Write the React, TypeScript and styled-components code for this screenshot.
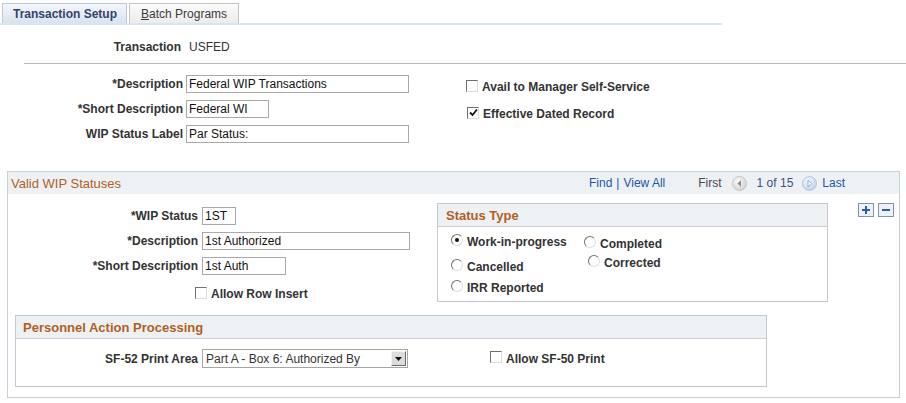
import React from "react";
import styled, { createGlobalStyle } from "styled-components";

const GlobalStyle = createGlobalStyle`
  body {
    margin: 0;
    background: #ffffff;
    font-family: "Liberation Sans", Arial, sans-serif;
    font-size: 12px;
    color: #333333;
  }
`;

const Page = styled.div`
  width: 906px;
  height: 403px;
  overflow: hidden;
`;

// tabs
const TabBar = styled.div`
  display: flex;
  align-items: flex-end;
  gap: 2px;
  width: 722px;
  padding: 3px 0 0 2px;
  border-bottom: 2px solid #dbe4f1;
  box-sizing: border-box;
`;

const Tab = styled.div<{ $active?: boolean; $w: number }>`
  width: ${(p) => p.$w}px;
  height: 20px;
  box-sizing: border-box;
  display: flex;
  align-items: center;
  padding-left: ${(p) => (p.$active ? 10 : 11)}px;
  border: 1px solid ${(p) => (p.$active ? "#b9c9df" : "#c3c3c3")};
  border-bottom: none;
  font-weight: ${(p) => (p.$active ? "bold" : "normal")};
  color: ${(p) => (p.$active ? "#34446a" : "#3a3a3a")};
  background: ${(p) =>
    p.$active
      ? "linear-gradient(#f3f6fb, #d9e3f1)"
      : "linear-gradient(#fbfbfb, #ececec)"};

  u {
    text-decoration: underline;
  }
`;

// header info
const InfoRow = styled.div`
  display: grid;
  grid-template-columns: 181px auto;
  column-gap: 8px;
  margin-top: 15px;
  line-height: 14px;
`;

const Label = styled.span`
  font-weight: bold;
  text-align: right;
  color: #333333;
  white-space: nowrap;
`;

const Value = styled.span`
  color: #333333;
`;

const Divider = styled.div`
  margin: 9px 0 0 24px;
  border-top: 1px solid #bababa;
`;

const TopForm = styled.div`
  display: flex;
  margin-top: 11px;
`;

const FieldGrid = styled.div<{ $label: number; $gap?: number; $rowGap?: number }>`
  display: grid;
  grid-template-columns: ${(p) => p.$label}px auto;
  column-gap: ${(p) => p.$gap ?? 3}px;
  row-gap: ${(p) => p.$rowGap ?? 7}px;
  align-items: center;
  align-content: start;
`;

const TextField = styled.input<{ $w: number }>`
  width: ${(p) => p.$w}px;
  height: 18px;
  box-sizing: border-box;
  border: 1px solid #a9a9a9;
  padding: 0 2px;
  margin: 0;
  font-family: "Liberation Sans", Arial, sans-serif;
  font-size: 12px;
  color: #111111;
  background: #ffffff;
  outline: none;
  justify-self: start;
`;

const CheckColumn = styled.div`
  display: flex;
  flex-direction: column;
  gap: 13px;
  margin-left: 57px;
  padding-top: 5px;
`;

const CheckRow = styled.label<{ $ml?: number; $mt?: number }>`
  display: flex;
  align-items: center;
  gap: 4px;
  height: 14px;
  margin-left: ${(p) => p.$ml ?? 0}px;
  margin-top: ${(p) => p.$mt ?? 0}px;
  font-weight: bold;
  color: #333333;
  white-space: nowrap;
`;

const Box = styled.span`
  width: 12px;
  height: 12px;
  box-sizing: border-box;
  border: 1px solid;
  border-color: #707070 #dcdcdc #dcdcdc #707070;
  background: #ffffff;
  display: inline-flex;
  align-items: center;
  justify-content: center;
  flex: none;
  margin-top: -3px;
`;

const RadioDot = styled.span<{ $on?: boolean }>`
  width: 12px;
  height: 12px;
  box-sizing: border-box;
  border-radius: 50%;
  border: 1px solid;
  border-color: #707070 #dedede #dedede #707070;
  background: #ffffff;
  display: inline-flex;
  align-items: center;
  justify-content: center;
  flex: none;
  margin-top: -4px;

  &::after {
    content: "";
    width: 4px;
    height: 4px;
    border-radius: 50%;
    background: ${(p) => (p.$on ? "#111111" : "transparent")};
  }
`;

// scroll area section
const Section = styled.div`
  margin: 28px 6px 0 7px;
  border: 1px solid #c9cfd6;
  padding-bottom: 10px;
`;

const SectionHeader = styled.div`
  height: 22px;
  background: #eef1f4;
  display: flex;
  align-items: center;
  padding: 0 54px 0 3px;
`;

const SectionTitle = styled.span`
  font-size: 13px;
  color: #b1601f;
`;

const Nav = styled.div`
  display: flex;
  align-items: center;
  margin-left: auto;
`;

const NavText = styled.span<{ $tone?: "link" | "muted" | "count"; $ml?: number }>`
  margin-left: ${(p) => p.$ml ?? 0}px;
  color: ${(p) =>
    p.$tone === "link" ? "#2356a8" : p.$tone === "count" ? "#3a4f86" : "#4a4a4a"};
  white-space: nowrap;
`;

const NavIcon = styled.svg<{ $ml: number }>`
  margin-left: ${(p) => p.$ml}px;
  flex: none;
`;

const SectionBody = styled.div`
  display: grid;
  grid-template-columns: 429px 391px auto;
  padding-top: 9px;
`;

const LeftCol = styled.div`
  padding-top: 4px;
`;

const GroupBox = styled.div<{ $w: number; $h: number }>`
  width: ${(p) => p.$w}px;
  height: ${(p) => p.$h}px;
  box-sizing: border-box;
  border: 1px solid #c4c9cf;
`;

const GroupHeader = styled.div<{ $pl: number }>`
  height: 22px;
  display: flex;
  align-items: center;
  padding-left: ${(p) => p.$pl}px;
  background: #eef1f4;
  border-bottom: 1px solid #c9ced4;
  font-size: 13px;
  font-weight: bold;
  color: #b1601f;
`;

const RadioGrid = styled.div`
  display: grid;
  grid-template-columns: 133px auto;
  row-gap: 7px;
  padding: 8px 0 0 13px;
`;

const RowButtons = styled.div`
  display: flex;
  gap: 4px;
  margin-left: 30px;
  align-items: flex-start;
`;

const Personnel = styled(GroupBox)`
  margin: 13px 0 0 7px;
`;

const PersonnelBody = styled.div`
  display: flex;
  align-items: center;
  padding-top: 10px;
`;

const Select = styled.div`
  width: 206px;
  height: 19px;
  box-sizing: border-box;
  border: 1px solid #a5a5a5;
  display: flex;
  align-items: center;
  justify-content: space-between;
  padding: 0 1px 0 3px;
  color: #333333;
  background: #ffffff;
`;

const SelectArrow = styled.span`
  width: 15px;
  height: 15px;
  box-sizing: border-box;
  border: 1px solid;
  border-color: #f4f4f4 #6a6a6a #6a6a6a #f4f4f4;
  background: #dcdcdc;
  display: inline-flex;
  align-items: center;
  justify-content: center;
`;

const Checkbox = ({ checked }: { checked?: boolean }) => (
  <Box>
    {checked && (
      <svg width="9" height="9" viewBox="0 0 9 9">
        <path d="M1 4.5 L3.5 7 L8 1.5" stroke="#111" strokeWidth="1.8" fill="none" />
      </svg>
    )}
  </Box>
);

const PrevIcon = () => (
  <NavIcon $ml={10} width="15" height="15" viewBox="0 0 15 15">
    <defs>
      <radialGradient id="pg" cx="0.4" cy="0.35" r="0.7">
        <stop offset="0" stopColor="#fbfbfb" />
        <stop offset="1" stopColor="#cfcfcf" />
      </radialGradient>
    </defs>
    <circle cx="7.5" cy="7.5" r="7" fill="url(#pg)" stroke="#c6c6c6" />
    <path d="M9 4.2 L5.4 7.5 L9 10.8 Z" fill="#8c8c8c" />
  </NavIcon>
);

const NextIcon = () => (
  <NavIcon $ml={9} width="15" height="15" viewBox="0 0 15 15">
    <defs>
      <radialGradient id="ng" cx="0.4" cy="0.35" r="0.7">
        <stop offset="0" stopColor="#f4f8fd" />
        <stop offset="1" stopColor="#bcd1ec" />
      </radialGradient>
    </defs>
    <circle cx="7.5" cy="7.5" r="7" fill="url(#ng)" stroke="#b4c8e2" />
    <path d="M6 4.2 L9.6 7.5 L6 10.8 Z" fill="#ffffff" stroke="#7f9ccb" strokeWidth="0.8" />
  </NavIcon>
);

const RowButton = ({ minus }: { minus?: boolean }) => (
  <svg width="16" height="14" viewBox="0 0 16 14">
    <rect x="0.5" y="0.5" width="15" height="13" fill="#eef2f8" stroke="#7c93b4" />
    <path d="M4 7 H12" stroke="#2a5ea8" strokeWidth="2" />
    {!minus && <path d="M8 3 V11" stroke="#2a5ea8" strokeWidth="2" />}
  </svg>
);

const App: React.FC = () => {
  return (
    <Page>
      <GlobalStyle />
      <TabBar>
        <Tab $active $w={125}>Transaction Setup</Tab>
        <Tab $w={110}>
          <u>B</u>atch Programs
        </Tab>
      </TabBar>

      <InfoRow>
        <Label>Transaction</Label>
        <Value>USFED</Value>
      </InfoRow>
      <Divider />

      <TopForm>
        <FieldGrid $label={183}>
          <Label>*Description</Label>
          <TextField $w={223} readOnly value="Federal WIP Transactions" />
          <Label>*Short Description</Label>
          <TextField $w={83} readOnly value="Federal WI" />
          <Label>WIP Status Label</Label>
          <TextField $w={223} readOnly value="Par Status:" />
        </FieldGrid>
        <CheckColumn>
          <CheckRow>
            <Checkbox />
            Avail to Manager Self-Service
          </CheckRow>
          <CheckRow $ml={1}>
            <Checkbox checked />
            Effective Dated Record
          </CheckRow>
        </CheckColumn>
      </TopForm>

      <Section>
        <SectionHeader>
          <SectionTitle>Valid WIP Statuses</SectionTitle>
          <Nav>
            <NavText $tone="link">Find</NavText>
            <NavText $tone="link" $ml={4}>|</NavText>
            <NavText $tone="link" $ml={4}>View All</NavText>
            <NavText $ml={33}>First</NavText>
            <PrevIcon />
            <NavText $tone="count" $ml={10}>1 of 15</NavText>
            <NextIcon />
            <NavText $tone="link" $ml={5}>Last</NavText>
          </Nav>
        </SectionHeader>

        <SectionBody>
          <LeftCol>
            <FieldGrid $label={190} $gap={4} $rowGap={7}>
              <Label>*WIP Status</Label>
              <TextField $w={34} readOnly value="1ST" />
              <Label>*Description</Label>
              <TextField $w={208} readOnly value="1st Authorized" />
              <Label>*Short Description</Label>
              <TextField $w={84} readOnly value="1st Auth" />
            </FieldGrid>
            <CheckRow $ml={187} $mt={12}>
              <Checkbox />
              Allow Row Insert
            </CheckRow>
          </LeftCol>

          <GroupBox $w={391} $h={99}>
            <GroupHeader $pl={8}>Status Type</GroupHeader>
            <RadioGrid>
              <CheckRow>
                <RadioDot $on />
                Work-in-progress
              </CheckRow>
              <CheckRow $mt={2}>
                <RadioDot />
                Completed
              </CheckRow>
              <CheckRow $mt={2}>
                <RadioDot />
                Cancelled
              </CheckRow>
              <CheckRow $ml={4} $mt={-2}>
                <RadioDot />
                Corrected
              </CheckRow>
              <CheckRow>
                <RadioDot />
                IRR Reported
              </CheckRow>
            </RadioGrid>
          </GroupBox>

          <RowButtons>
            <RowButton />
            <RowButton minus />
          </RowButtons>
        </SectionBody>

        <Personnel $w={752} $h={72}>
          <GroupHeader $pl={7}>Personnel Action Processing</GroupHeader>
          <PersonnelBody>
            <FieldGrid $label={182} $gap={4}>
              <Label>SF-52 Print Area</Label>
              <Select>
                Part A - Box 6: Authorized By
                <SelectArrow>
                  <svg width="7" height="4" viewBox="0 0 7 4">
                    <path d="M0 0 H7 L3.5 4 Z" fill="#111" />
                  </svg>
                </SelectArrow>
              </Select>
            </FieldGrid>
            <CheckRow $ml={82}>
              <Checkbox />
              Allow SF-50 Print
            </CheckRow>
          </PersonnelBody>
        </Personnel>
      </Section>
    </Page>
  );
};

export default App;
